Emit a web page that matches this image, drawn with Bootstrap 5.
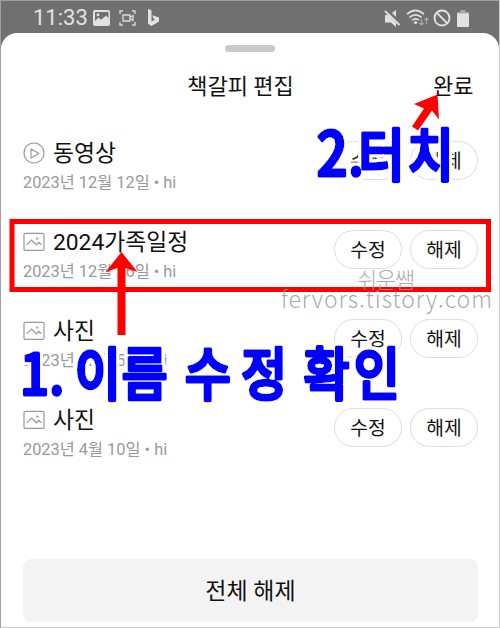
<!DOCTYPE html>
<html lang="ko">
<head>
<meta charset="utf-8">
<meta name="viewport" content="width=device-width, initial-scale=1">
<title>책갈피 편집</title>
<link href="https://cdn.jsdelivr.net/npm/bootstrap@5.3.0/dist/css/bootstrap.min.css" rel="stylesheet">
<style>
body{font-family:Roboto,"Noto Sans CJK KR",sans-serif;color:#111;background:#707070}
.screen{width:500px;height:628px;border:1px solid #a0a0a0;border-right-color:#ccc;border-bottom-color:#ccc;background:#707070}
.statusbar{height:32px;padding:2px 30px 0 32px;color:#e2e2e2;font-size:22px;line-height:32px}
.statusbar svg{display:block}
.sheet{height:594px;border-radius:16px 16px 0 0;background:#fff;padding:0 21px 0 22px}
.grip{width:50px;height:7px;background:#c9c9c9;margin:12px 2px 0 0;border-radius:4px}
.sheet-head{height:60px;font-size:22px;line-height:34px;padding-top:18px}
.head-side{width:45px}
.head-start{width:25px}
.entries{margin-top:24px}
.entry{height:89px}
.entry-title{font-size:22.8px;line-height:34px;height:34px}
.entry-title svg{margin-right:8px}
.entry-title span{padding-top:2px}
.entry-sub{font-size:16.35px;line-height:26px;color:#999;white-space:nowrap}
.pill{width:68px;height:39px;border:1px solid #ddd;border-radius:20px;background:#fff;font-size:19.3px;line-height:36px;padding:2px 0 0;margin-top:5px;color:#111}
.release-all{height:63px;border:0;border-radius:8px;background:#f3f3f3;font-size:23px;color:#111;margin-top:67px;padding-top:10px}
.notes{pointer-events:none;z-index:2}
.marker text{font-family:"Noto Sans CJK KR",sans-serif;font-weight:500;fill:#00f;stroke:#00f;stroke-width:3.6;stroke-linejoin:round}
.credit{font-family:"Noto Sans CJK KR",sans-serif;font-weight:300;fill:#999;fill-opacity:.85}
</style>
<script src="https://cdn.jsdelivr.net/npm/bootstrap@5.3.0/dist/js/bootstrap.bundle.min.js"></script>
</head>
<body class="overflow-hidden">
<svg width="0" height="0" class="position-absolute"><defs>
<symbol id="photo" viewBox="0 0 22 20"><g fill="none" stroke="#999" stroke-width="1.2"><rect x="1" y="1.4" width="20" height="17" rx="1.2"/><path d="M3.700 12.800 8.500 8l5 4.800 2.400-2.400 2.600 2.400"/></g><circle cx="14.200" cy="6.600" r="1.100" fill="#999"/></symbol>
</defs></svg>
<div class="screen position-relative overflow-hidden">
  <div class="statusbar d-flex align-items-center justify-content-between">
    <div class="d-flex align-items-center">
      <span>11:33</span>
      <svg style="margin-left:5px" width="18" height="16" viewBox="0 0 18 16"><path fill="#e2e2e2" fill-rule="evenodd" d="M2 0h13q2 0 2 2v12q0 2-2 2H2q-2 0-2-2V2q0-2 2-2zm0 2v9l3.500-3.500L8 9.800l5-4L15.500 8V2zM5 3.200a1.500 1.500 0 110 3 1.500 1.500 0 010-3z"/></svg>
      <svg style="margin-left:8px" width="18" height="16" viewBox="0 0 18 16"><path fill="none" stroke="#d8d8d8" stroke-width="1.400" d="M1 4V1h3m9 0h3v3m0 8v3h-3m-9 0H1v-3M4 5h7v6H4zm7 2.500 3-2v5l-3-2"/></svg>
      <svg style="margin-left:10px" width="14" height="18" viewBox="0 0 14 18"><path fill="#e2e2e2" d="m1 0 3.500 1.300v11.200L8 10.500 6.500 9.800 5.200 6.200 12 8.600v4L4.500 17 1 14.800z"/></svg>
    </div>
    <div class="d-flex align-items-center">
      <svg width="17" height="17" viewBox="0 0 17 17"><path fill="#e2e2e2" d="M1 5h3l8 8v4l-5-4.500H1zM8 3l4-3v7z"/><path stroke="#e2e2e2" stroke-width="1.800" d="m1 1 14.500 14"/></svg>
      <svg style="margin-left:5px" width="23" height="18" viewBox="0 0 23 18"><g fill="none" stroke="#e2e2e2" stroke-width="1.700"><path d="M1 5.200q8.500-7.500 17 0M3.500 8.400q6-5 12 0M6 11.200q3.500-2.800 7 0"/></g><circle cx="9.500" cy="13.500" r="1.600" fill="#e2e2e2"/><path fill="none" stroke="#aaa" stroke-width="1.200" d="M15.500 10v6m-2-2 2 2 2-2M20.500 15V9m-2 2 2-2 2 2"/></svg>
      <svg style="margin-left:4px" width="18" height="18" viewBox="0 0 18 18"><circle cx="9" cy="9" r="7.500" fill="none" stroke="#e2e2e2" stroke-width="1.900"/><path stroke="#e2e2e2" stroke-width="1.900" d="m3.700 3.700 10.600 10.600"/></svg>
      <svg style="margin-left:6px" width="12" height="17" viewBox="0 0 12 17"><path fill="#aaa" d="M3.500 0h5v2H12v2H0V2h3.500z"/><rect y="3.500" width="12" height="13.500" rx="1" fill="#e2e2e2"/></svg>
    </div>
  </div>
  <main class="sheet d-flex flex-column">
    <div class="grip align-self-center flex-shrink-0"></div>
    <header class="sheet-head d-flex justify-content-between flex-shrink-0">
      <span class="head-start"></span><span>책갈피 편집</span><span class="head-side">완료</span>
    </header>
    <section class="entries">
      <div class="entry d-flex justify-content-between">
        <div><div class="entry-title d-flex align-items-center"><svg width="22" height="22" viewBox="0 0 22 22"><g fill="none" stroke="#999" stroke-width="1.200"><circle cx="11" cy="11" r="10"/><path stroke-linejoin="round" d="m8 7 8 4.500-8 4.500z"/></g></svg><span>동영상</span></div><div class="entry-sub">2023년 12월 12일 • hi</div></div>
        <div class="d-flex gap-2"><button class="btn pill">수정</button><button class="btn pill">해제</button></div>
      </div>
      <div class="entry d-flex justify-content-between">
        <div><div class="entry-title d-flex align-items-center"><svg width="22" height="20"><use href="#photo"/></svg><span>2024가족일정</span></div><div class="entry-sub">2023년 12월 16일 • hi</div></div>
        <div class="d-flex gap-2"><button class="btn pill">수정</button><button class="btn pill">해제</button></div>
      </div>
      <div class="entry d-flex justify-content-between">
        <div><div class="entry-title d-flex align-items-center"><svg width="22" height="20"><use href="#photo"/></svg><span>사진</span></div><div class="entry-sub">2023년 12월 5일 • hi</div></div>
        <div class="d-flex gap-2"><button class="btn pill">수정</button><button class="btn pill">해제</button></div>
      </div>
      <div class="entry d-flex justify-content-between">
        <div><div class="entry-title d-flex align-items-center"><svg width="22" height="20"><use href="#photo"/></svg><span>사진</span></div><div class="entry-sub">2023년 4월 10일 • hi</div></div>
        <div class="d-flex gap-2"><button class="btn pill">수정</button><button class="btn pill">해제</button></div>
      </div>
    </section>
    <button class="btn release-all w-100 flex-shrink-0">전체 해제</button>
  </main>
</div>
<svg class="notes position-absolute top-0 start-0" width="500" height="628" viewBox="0 0 500 628">
  <defs><filter id="halo" x="-5%" y="-10%" width="110%" height="120%"><feMorphology in="SourceAlpha" operator="dilate" radius="3" result="wide"/><feFlood flood-color="#fff"/><feComposite in2="wide" operator="in"/><feMerge><feMergeNode/><feMergeNode in="SourceGraphic"/></feMerge></filter></defs>
  <rect x="12" y="221.500" width="476.500" height="68" fill="none" stroke="red" stroke-width="5"/>
  <text class="credit" x="357" y="288" font-size="22" textLength="58">쉬운쌤</text>
  <text class="credit" x="281" y="308" font-size="23" textLength="211">fervors.tistory.com</text>
  <g class="marker" filter="url(#halo)">
    <g transform="scale(.88 1)"><text y="395" font-size="57" x="23 56 85 138 210 274 345 402">1.이름수정확인</text></g>
    <g transform="scale(.88 1)"><text y="176" font-size="57" x="360 396 407 463"><tspan font-size="61">2</tspan>.터치</text></g>
  </g>
  <path fill="red" d="m121.500 252 16 20-12-4v67h-8v-67l-12 4zM437.500 94.500l1.500 25-7-9-14 20-6-4 12-18-10-4.500z"/>
</svg>
</body>
</html>
